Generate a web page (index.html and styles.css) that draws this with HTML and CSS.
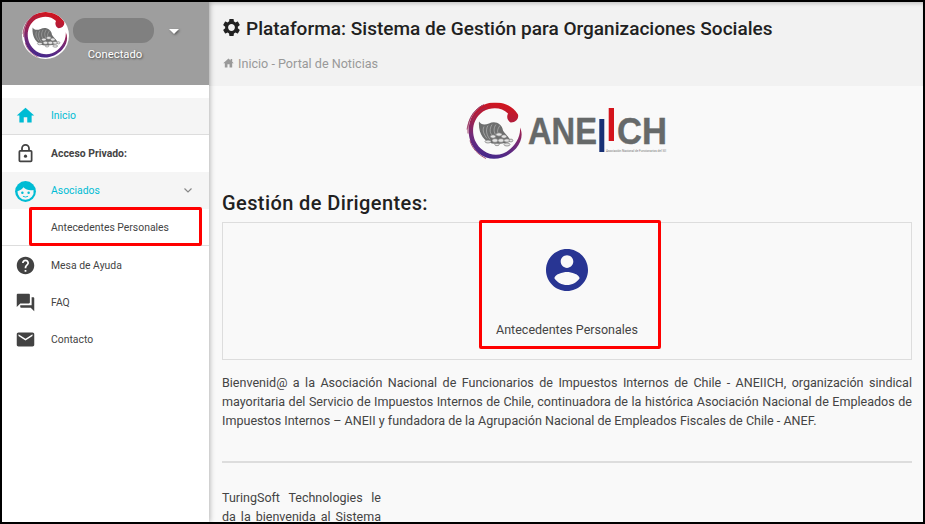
FILE: index.html
```html
<!DOCTYPE html>
<html lang="es">
<head>
    <meta charset="UTF-8">
    <meta name="viewport" content="width=device-width, initial-scale=1.0">
    <title>Plataforma ANEIICH</title>
    <link rel="stylesheet" href="styles.css">
</head>
<body>
    <!-- Shared emblem: brushed ring with the cornucopia inside -->
    <svg class="sprite" width="0" height="0">
        <defs>
            <linearGradient id="ring" x1="0.6" y1="0" x2="0.4" y2="1">
                <stop offset="0" stop-color="#d3151d" />
                <stop offset="0.3" stop-color="#b01c3c" />
                <stop offset="0.65" stop-color="#732a78" />
                <stop offset="1" stop-color="#44288c" />
            </linearGradient>
            <symbol id="emblem" viewBox="0 0 58 58">
                <path fill="url(#ring)" d="M45 20C50 20 53 16 52 12C47 4 39 0 30 0C19-1 9 6 5 16C0 28 3 43 13 51C24 60 40 57 50 46C56 39 57 31 54 25C55 36 47 47 37 51C26 55 14 49 9 38C5 28 7 16 17 9C26 4 36 5 42 11C40 15 42 19 45 20Z" />
                <path fill="none" stroke="#96305c" stroke-width="0.8" d="M2 31C1 19 6 9 16 3M1 27C3 15 8 7 18 2M4 38C6 46 12 52 20 56M6 20C8 13 13 8 21 5" />
                <path fill="#6d6e6e" d="M13 19C15 22 18 23 23 21C29 18 36 21 37 28C40 33 45 36 44 39C39 41 32 42 26 41C18 39 12 31 13 19Z" />
                <path fill="none" stroke="#d0d0d0" stroke-width="0.5" d="M18 24C16 28 18 32 21 36M22 23C19 28 21 33 24 37M26 22C23 27 24 31 27 34M30 22C27 26 28 30 30 33M34 23C31 27 31 30 33 32" />
                <g fill="#e4e4e4" stroke="#777" stroke-width="0.7">
                    <ellipse cx="22" cy="39" rx="3" ry="1.500" />
                    <ellipse cx="27" cy="34" rx="2.800" ry="1.700" />
                    <ellipse cx="33" cy="32" rx="3" ry="1.700" />
                    <ellipse cx="38" cy="34" rx="2.800" ry="1.800" />
                    <ellipse cx="29" cy="38" rx="3" ry="1.900" />
                    <ellipse cx="35" cy="38" rx="3" ry="1.900" />
                    <ellipse cx="41" cy="38" rx="3" ry="1.700" />
                    <ellipse cx="45" cy="38" rx="1.800" ry="1.400" />
                    <ellipse cx="41" cy="42" rx="3" ry="1.500" />
                    <ellipse cx="31" cy="42" rx="2.200" ry="1.200" />
                </g>
            </symbol>
        </defs>
    </svg>

    <div class="layout">
        <aside class="sidebar">
            <div class="profile">
                <svg class="avatar" viewBox="0 0 58 58"><use href="#emblem" /></svg>
                <div class="profile-info">
                    <span class="profile-name"></span>
                    <span class="profile-status">Conectado</span>
                </div>
                <svg class="caret" viewBox="0 0 10 5"><path fill="#fff" d="M0 0h10L5 5z" /></svg>
            </div>

            <nav class="menu">
                <a class="menu-item active first" href="#">
                    <svg class="icon" viewBox="0 0 24 24"><path d="M10 20v-6h4v6h5v-8h3L12 3 2 12h3v8z" /></svg>
                    <span>Inicio</span>
                </a>
                <div class="menu-item heading">
                    <svg class="icon" viewBox="0 0 24 24"><path fill="none" stroke="#424242" stroke-width="2" d="M6 9h12a1 1 0 0 1 1 1v10a1 1 0 0 1-1 1H6a1 1 0 0 1-1-1V10a1 1 0 0 1 1-1zM8 9V6a4 4 0 0 1 8 0v3" /><circle cx="12" cy="15" r="1.800" /></svg>
                    <span>Acceso Privado:</span>
                </div>
                <a class="menu-item active" href="#">
                    <svg class="icon large" viewBox="0 0 24 24"><circle cx="12" cy="12" r="10" /><path fill="#f5f5f5" d="M10 8C8.500 10 6.800 11.200 4.300 11.800A7.800 7.800 0 0 0 12 20a7.800 7.800 0 0 0 7.700-9.400C15.800 11.200 12.500 10.600 10 8z" /><circle cx="9" cy="13.300" r="1.200" /><circle cx="15" cy="13.300" r="1.200" /><path fill="none" stroke="#00bcd4" stroke-width="0.900" d="M9.500 16.600Q12 18 14.500 16.600" /></svg>
                    <span>Asociados</span>
                    <svg class="chevron" viewBox="0 0 8 5"><path fill="none" stroke="#888" stroke-width="1.200" d="M.5.500L4 4 7.500.5" /></svg>
                </a>
                <div class="submenu">
                    <a class="submenu-item" href="#">Antecedentes Personales</a>
                </div>
                <a class="menu-item" href="#">
                    <svg class="icon" viewBox="0 0 24 24"><path d="M12 2C6.480 2 2 6.480 2 12s4.480 10 10 10 10-4.480 10-10S17.520 2 12 2zm1 17h-2v-2h2v2zm2.070-7.750l-.9.920C13.450 12.900 13 13.500 13 15h-2v-.5c0-1.100.45-2.100 1.170-2.830l1.240-1.260c.37-.36.590-.86.590-1.410 0-1.100-.9-2-2-2s-2 .9-2 2H8c0-2.210 1.790-4 4-4s4 1.790 4 4c0 .88-.36 1.680-.93 2.250z" /></svg>
                    <span>Mesa de Ayuda</span>
                </a>
                <a class="menu-item" href="#">
                    <svg class="icon" viewBox="0 0 24 24"><path d="M21 6h-2v9H6v2c0 .55.45 1 1 1h11l4 4V7c0-.55-.45-1-1-1zm-4 6V3c0-.55-.45-1-1-1H3c-.55 0-1 .45-1 1v14l4-4h10c.55 0 1-.45 1-1z" /></svg>
                    <span>FAQ</span>
                </a>
                <a class="menu-item" href="#">
                    <svg class="icon" viewBox="0 0 24 24"><path d="M20 4H4c-1.100 0-2 .9-2 2v12c0 1.100.9 2 2 2h16c1.100 0 2-.9 2-2V6c0-1.100-.9-2-2-2zm0 4l-8 5-8-5V6l8 5 8-5v2z" /></svg>
                    <span>Contacto</span>
                </a>
            </nav>
        </aside>

        <main class="main">
            <header class="page-header">
                <h1 class="page-title">
                    <svg class="title-icon" viewBox="2 2 20 20"><path fill="#212121" d="M19.430 12.980c.04-.32.070-.64.070-.98s-.03-.66-.07-.98l2.110-1.650c.19-.15.240-.42.120-.64l-2-3.460c-.12-.22-.39-.3-.61-.22l-2.490 1c-.52-.4-1.080-.73-1.690-.98l-.38-2.650C14.460 2.180 14.250 2 14 2h-4c-.25 0-.46.180-.49.420l-.38 2.650c-.61.250-1.170.590-1.690.980l-2.490-1c-.23-.09-.49 0-.61.220l-2 3.460c-.13.220-.07.490.12.640l2.110 1.650c-.04.320-.07.650-.07.980s.03.660.07.980l-2.110 1.650c-.19.150-.24.420-.12.640l2 3.460c.12.220.39.300.61.220l2.490-1c.52.400 1.080.730 1.690.980l.38 2.650c.03.240.24.420.49.420h4c.25 0 .46-.18.490-.42l.38-2.650c.61-.25 1.170-.59 1.690-.98l2.490 1c.23.090.49 0 .61-.22l2-3.460c.12-.22.070-.49-.12-.64l-2.110-1.650zM12 16c-2.200 0-4-1.800-4-4s1.800-4 4-4 4 1.800 4 4-1.800 4-4 4z" /></svg>
                    <span>Plataforma: Sistema de Gestión para Organizaciones Sociales</span>
                </h1>
                <div class="breadcrumb">
                    <svg class="crumb-icon" viewBox="2 2 20 19"><path fill="#999" d="M10 20v-6h4v6h5v-8h3L19 9.300V4h-3v2.600L12 3 2 12h3v8z" /></svg>
                    <span>Inicio - Portal de Noticias</span>
                </div>
            </header>

            <section class="content">
                <svg class="logo" viewBox="0 0 200 60">
                    <use href="#emblem" x="-1" y="1.500" width="58" height="58" />
                    <g class="logo-text">
                        <text x="61" y="43" textLength="69" lengthAdjust="spacingAndGlyphs">ANE</text>
                        <text x="150" y="43" textLength="50" lengthAdjust="spacingAndGlyphs">CH</text>
                    </g>
                    <path fill="#173074" d="M132.300 18h5v33h-5z" />
                    <path fill="#d4141c" d="M141.700 7h5.300v33h-5.300z" />
                    <text class="logo-caption" x="139" y="51" textLength="60" lengthAdjust="spacingAndGlyphs">Asociación Nacional de Funcionarios del SII</text>
                </svg>

                <h2 class="section-title">Gestión de Dirigentes:</h2>
                <div class="panel">
                    <a class="tile" href="#">
                        <svg class="tile-icon" viewBox="2 2 20 20"><path fill="#283593" d="M12 2C6.480 2 2 6.480 2 12s4.480 10 10 10 10-4.480 10-10S17.520 2 12 2zm0 3c1.660 0 3 1.340 3 3s-1.340 3-3 3-3-1.340-3-3 1.340-3 3-3zm0 14.200c-2.500 0-4.710-1.280-6-3.220.03-1.990 4-3.080 6-3.080 1.990 0 5.970 1.090 6 3.080-1.290 1.940-3.500 3.220-6 3.220z" /></svg>
                        <span>Antecedentes Personales</span>
                    </a>
                </div>

                <p class="intro">Bienvenid@ a la Asociación Nacional de Funcionarios de Impuestos Internos de Chile - ANEIICH, organización sindical mayoritaria del Servicio de Impuestos Internos de Chile, continuadora de la histórica Asociación Nacional de Empleados de Impuestos Internos – ANEII y fundadora de la Agrupación Nacional de Empleados Fiscales de Chile - ANEF.</p>
                <hr class="divider">
                <p class="welcome">TuringSoft Technologies le da la bienvenida al Sistema</p>
            </section>
        </main>
    </div>
</body>
</html>
```

FILE: styles.css
```css
* {
    box-sizing: border-box;
}

body {
    margin: 0;
    height: 524px;
    overflow: hidden;
    font-family: Roboto, "Liberation Sans", sans-serif;
    font-size: 12.5px;
    color: #444;
}

a {
    color: inherit;
    text-decoration: none;
}

.sprite {
    position: absolute;
}

.layout {
    display: flex;
    height: 524px;
    border: 2px solid #000;
    background-color: #f9f9f9;
}

/* Sidebar */
.sidebar {
    flex: none;
    width: 207px;
    background-color: #fff;
    box-shadow: 1px 0 5px rgba(0, 0, 0, 0.28);
    z-index: 1;
}

.profile {
    display: flex;
    align-items: flex-start;
    height: 83px;
    padding: 10px 0 0 20px;
    background-color: #9e9e9e;
}

.avatar {
    width: 47px;
    height: 47px;
    border-radius: 50%;
    background-color: #fff;
}

.profile-info {
    display: flex;
    flex-direction: column;
    align-items: center;
    width: 81px;
    margin: 6px 0 0 4px;
}

.profile-name {
    width: 81px;
    height: 25px;
    border-radius: 12px;
    background-color: #808080;
}

.profile-status {
    margin: 4px 0 0 3px;
    font-size: 11.3px;
    line-height: 15px;
    color: #fff;
    text-shadow: 1px 1px 2px #444;
}

.caret {
    width: 10px;
    height: 5px;
    margin: 17px 0 0 15px;
    filter: drop-shadow(1px 1px 1px #555);
}

.menu {
    padding-top: 13px;
}

.menu-item {
    display: flex;
    align-items: center;
    height: 37px;
    padding-left: 13px;
    font-size: 10.4px;
    fill: #424242;
}

.menu-item span {
    margin-left: 15px;
}

.menu-item.active {
    background-color: #f5f5f5;
    color: #00bcd4;
    fill: #00bcd4;
}

.menu-item.first {
    padding-bottom: 2px;
    border-bottom: 1px solid #ddd;
}

.menu-item.heading {
    font-weight: 700;
}

.icon {
    width: 21px;
    height: 21px;
}

.icon.large {
    width: 25px;
    height: 25px;
    margin: 1px -2px 0;
}

.chevron {
    width: 8px;
    height: 5px;
    margin: 0 17px 0 auto;
}

.submenu {
    height: 39px;
    margin-bottom: 1px;
    padding: 0 7px 0 27px;
    border-bottom: 1px solid #ddd;
}

.submenu-item {
    display: flex;
    align-items: center;
    width: 173px;
    height: 39px;
    margin-top: -2px;
    padding: 2px 0 0 19px;
    border: 3px solid #f00;
    border-radius: 2px;
    font-size: 10.4px;
    position: relative;
}

/* Main */
.main {
    flex: 1;
    min-width: 0;
}

.page-header {
    height: 84px;
    padding: 15px 0 0 13px;
    background-color: #f2f2f2;
    box-shadow: inset 0 3px 4px -2px rgba(0, 0, 0, 0.25);
}

.page-title {
    display: flex;
    align-items: center;
    margin: 0;
    font-size: 19px;
    font-weight: 500;
    line-height: 24px;
    letter-spacing: 0.02px;
    color: #212121;
    white-space: nowrap;
}

.title-icon {
    width: 17px;
    height: 17px;
    margin: -4px 6px 0 1px;
}

.breadcrumb {
    display: flex;
    align-items: center;
    margin-top: 13px;
    font-size: 12.6px;
    line-height: 20px;
    color: #999;
}

.crumb-icon {
    width: 11px;
    height: 10px;
    margin: -2px 4px 0 1px;
}

.content {
    display: flex;
    flex-direction: column;
    padding: 15px 11px 0 13px;
}

.logo {
    align-self: center;
    width: 200px;
    height: 60px;
    overflow: visible;
}

.logo-text {
    font-family: "Liberation Sans", sans-serif;
    font-size: 37px;
    font-weight: 700;
    fill: #666969;
    stroke: #666969;
    stroke-width: 0.4px;
}

.logo-caption {
    font-size: 4px;
    fill: #777;
}

.section-title {
    margin: 30px 0 6px;
    font-size: 20px;
    font-weight: 500;
    line-height: 25px;
    letter-spacing: 0.4px;
    color: #212121;
}

.panel {
    display: flex;
    height: 138px;
    padding-left: 256px;
    border: 1px solid #ddd;
}

.tile {
    display: flex;
    flex-direction: column;
    align-items: center;
    width: 182px;
    height: 129px;
    margin-top: -3px;
    padding: 26px 6px 0 0;
    border: 3px solid #f00;
    border-radius: 2px;
}

.tile-icon {
    width: 42px;
    height: 42px;
    margin-bottom: 29px;
}

.tile span {
    line-height: 20px;
}

.intro {
    margin: 14px 0 0;
    font-size: 12.55px;
    line-height: 18.9px;
    text-align: justify;
}

.divider {
    width: 100%;
    height: 2px;
    margin: 30px 0 26px;
    border: 0;
    background-color: #ddd;
}

.welcome {
    width: 159px;
    margin: 0;
    line-height: 18.9px;
    text-align: justify;
    text-align-last: justify;
}
```
